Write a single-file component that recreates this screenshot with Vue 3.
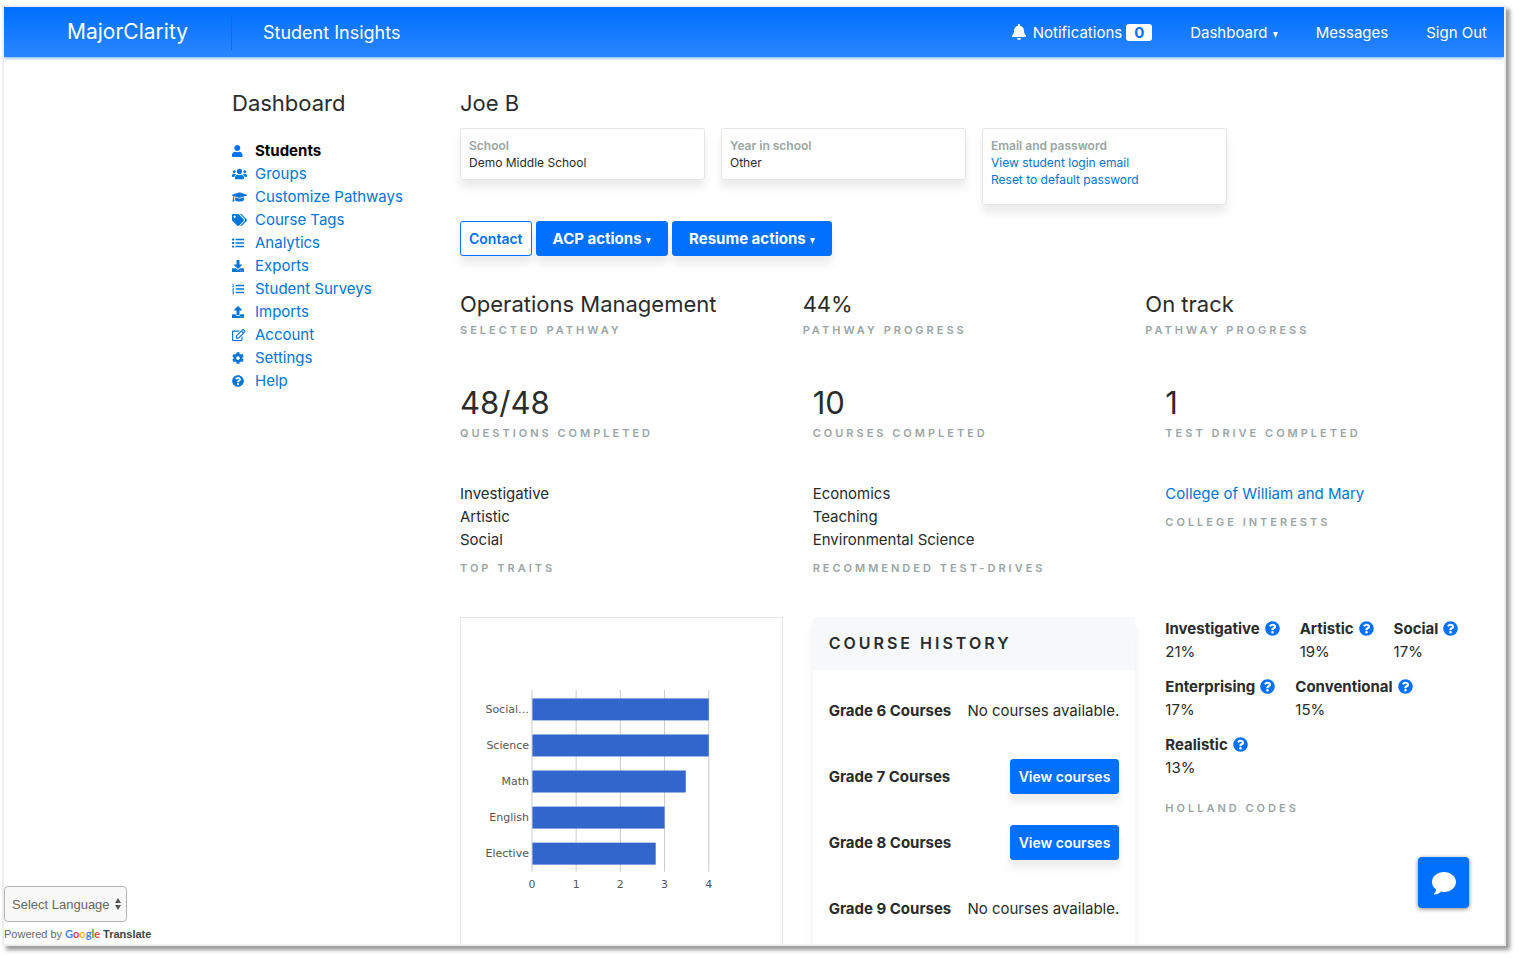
<script setup>
const icons = {
  user: { w: 448, d: 'M224 256c70.7 0 128-57.3 128-128S294.7 0 224 0 96 57.3 96 128s57.3 128 128 128zm89.6 32h-16.7c-22.2 10.2-46.9 16-72.9 16s-50.6-5.8-72.9-16h-16.7C60.2 288 0 348.2 0 422.4V464c0 26.5 21.5 48 48 48h352c26.5 0 48-21.5 48-48v-41.6c0-74.2-60.2-134.4-134.4-134.4z' },
  users: { w: 640, d: 'M96 224c35.3 0 64-28.7 64-64s-28.7-64-64-64-64 28.7-64 64 28.7 64 64 64zm448 0c35.3 0 64-28.7 64-64s-28.7-64-64-64-64 28.7-64 64 28.7 64 64 64zm32 32h-64c-17.6 0-33.5 7.1-45.1 18.6 40.3 22.1 68.9 62 75.1 109.4h66c17.7 0 32-14.3 32-32v-32c0-35.3-28.7-64-64-64zm-256 0c61.9 0 112-50.1 112-112S381.9 32 320 32 208 82.1 208 144s50.1 112 112 112zm76.8 32h-8.3c-20.8 10-43.9 16-68.5 16s-47.6-6-68.5-16h-8.3C179.6 288 128 339.6 128 403.2V432c0 26.5 21.5 48 48 48h288c26.5 0 48-21.5 48-48v-28.8c0-63.6-51.6-115.2-115.2-115.2zm-223.7-13.4C161.5 263.1 145.6 256 128 256H64c-35.3 0-64 28.7-64 64v32c0 17.7 14.3 32 32 32h65.9c6.3-47.4 34.9-87.3 75.2-109.4z' },
  cap: { w: 640, d: 'M622.34 153.2L343.4 67.5c-15.2-4.67-31.6-4.67-46.79 0L17.66 153.2c-23.54 7.23-23.54 38.36 0 45.59l48.63 14.94c-10.67 13.19-17.23 29.28-17.88 46.9C38.78 266.15 32 276.11 32 288c0 10.78 5.68 19.85 13.86 25.65L20.33 428.53C18.11 438.52 25.71 448 35.94 448h56.11c10.24 0 17.84-9.48 15.62-19.47L82.14 313.65C90.32 307.85 96 298.78 96 288c0-11.57-6.47-21.25-15.66-26.87.76-15.02 8.44-28.3 20.69-36.72L296.6 284.5c9.06 2.78 26.44 6.25 46.79 0l278.95-85.7c23.55-7.24 23.55-38.36 0-45.6zM352.79 315.09c-28.53 8.76-52.84 3.92-65.59 0l-145.02-44.55L128 384c0 35.35 85.96 64 192 64s192-28.65 192-64l-14.18-113.47-145.03 44.56z' },
  tags: { w: 640, d: 'M497.941 225.941L286.059 14.059A48 48 0 0 0 252.118 0H48C21.49 0 0 21.49 0 48v204.118a48 48 0 0 0 14.059 33.941l211.882 211.882c18.744 18.745 49.136 18.746 67.882 0l204.118-204.118c18.745-18.745 18.745-49.137 0-67.882zM112 160c-26.51 0-48-21.49-48-48s21.49-48 48-48 48 21.49 48 48-21.49 48-48 48zm513.941 133.823L421.823 497.941c-18.745 18.745-49.137 18.745-67.882 0l-.36-.36L527.64 323.522c16.999-16.999 26.362-39.6 26.362-63.64s-9.362-46.641-26.362-63.64L331.397 0h48.721a48 48 0 0 1 33.941 14.059l211.882 211.882c18.745 18.745 18.745 49.137 0 67.882z' },
  list: { w: 512, d: 'M16 64h64a16 16 0 0 1 16 16v48a16 16 0 0 1-16 16H16a16 16 0 0 1-16-16V80a16 16 0 0 1 16-16zM16 216h64a16 16 0 0 1 16 16v48a16 16 0 0 1-16 16H16a16 16 0 0 1-16-16v-48a16 16 0 0 1 16-16zM16 368h64a16 16 0 0 1 16 16v48a16 16 0 0 1-16 16H16a16 16 0 0 1-16-16v-48a16 16 0 0 1 16-16zM160 72h336a16 16 0 0 1 16 16v32a16 16 0 0 1-16 16H160a16 16 0 0 1-16-16V88a16 16 0 0 1 16-16zM160 224h336a16 16 0 0 1 16 16v32a16 16 0 0 1-16 16H160a16 16 0 0 1-16-16v-32a16 16 0 0 1 16-16zM160 376h336a16 16 0 0 1 16 16v32a16 16 0 0 1-16 16H160a16 16 0 0 1-16-16v-32a16 16 0 0 1 16-16z' },
  ordered: { w: 512, d: 'M24 48h40v96h24v24H8v-24h24V80H8V60zM8 200h80v56l-44 36h44v26H4v-24l52-44v-22H8zM8 352h80v124H8v-26h52v-24H24v-22h36v-26H8zM176 72h320a16 16 0 0 1 16 16v32a16 16 0 0 1-16 16H176a16 16 0 0 1-16-16V88a16 16 0 0 1 16-16zM176 224h320a16 16 0 0 1 16 16v32a16 16 0 0 1-16 16H176a16 16 0 0 1-16-16v-32a16 16 0 0 1 16-16zM176 376h320a16 16 0 0 1 16 16v32a16 16 0 0 1-16 16H176a16 16 0 0 1-16-16v-32a16 16 0 0 1 16-16z' },
  download: { w: 512, d: 'M216 0h80c13.3 0 24 10.7 24 24v168h87.7c17.8 0 26.7 21.5 14.1 34.1L269.7 378.3c-7.5 7.5-19.8 7.5-27.3 0L90.1 226.1c-12.6-12.6-3.7-34.1 14.1-34.1H192V24c0-13.3 10.7-24 24-24zm296 376v112c0 13.3-10.7 24-24 24H24c-13.3 0-24-10.7-24-24V376c0-13.3 10.7-24 24-24h146.7l49 49c20.1 20.1 52.5 20.1 72.6 0l49-49H488c13.3 0 24 10.7 24 24zm-124 88c0-11-9-20-20-20s-20 9-20 20 9 20 20 20 20-9 20-20zm64 0c0-11-9-20-20-20s-20 9-20 20 9 20 20 20 20-9 20-20z' },
  upload: { w: 512, d: 'M296 384h-80c-13.3 0-24-10.7-24-24V192h-87.7c-17.8 0-26.7-21.5-14.1-34.1L242.3 5.7c7.5-7.5 19.8-7.5 27.3 0l152.2 152.2c12.6 12.6 3.7 34.1-14.1 34.1H320v168c0 13.3-10.7 24-24 24zm216-8v112c0 13.3-10.7 24-24 24H24c-13.3 0-24-10.7-24-24V376c0-13.3 10.7-24 24-24h136v8c0 30.9 25.1 56 56 56h80c30.9 0 56-25.1 56-56v-8h136c13.3 0 24 10.7 24 24zm-124 88c0-11-9-20-20-20s-20 9-20 20 9 20 20 20 20-9 20-20zm64 0c0-11-9-20-20-20s-20 9-20 20 9 20 20 20 20-9 20-20z' },
  edit: { w: 576, d: 'M402.3 344.9l32-32c5-5 13.7-1.5 13.7 5.7V464c0 26.5-21.5 48-48 48H48c-26.5 0-48-21.5-48-48V112c0-26.5 21.5-48 48-48h273.5c7.1 0 10.7 8.6 5.7 13.7l-32 32c-1.5 1.5-3.5 2.3-5.7 2.3H48v352h352V350.5c0-2.1.8-4.1 2.3-5.6zm156.6-201.8L296.3 405.7l-90.4 10c-26.2 2.9-48.5-19.2-45.6-45.6l10-90.4L432.9 17.1c22.9-22.9 59.9-22.9 82.7 0l43.2 43.2c22.9 22.9 22.9 60 .1 82.8zM460.1 174L402 115.9 216.2 301.8l-7.3 65.3 65.3-7.3L460.1 174zm64.8-79.7l-43.2-43.2c-4.1-4.1-10.8-4.1-14.8 0L436 82l58.1 58.1 30.9-30.9c4-4.2 4-10.8-.1-14.9z' },
  cog: { w: 512, d: 'M487.4 315.7l-42.6-24.6c4.3-23.2 4.3-47 0-70.2l42.6-24.6c4.9-2.8 7.1-8.6 5.5-14-11.1-35.6-30-67.8-54.7-94.6-3.8-4.1-10-5.1-14.8-2.3L380.8 110c-17.9-15.4-38.5-27.3-60.8-35.1V25.8c0-5.6-3.9-10.5-9.4-11.7-36.7-8.2-74.3-7.8-109.2 0-5.5 1.2-9.4 6.1-9.4 11.7V75c-22.2 7.9-42.8 19.8-60.8 35.1L88.7 85.5c-4.9-2.8-11-1.9-14.8 2.3-24.7 26.7-43.6 58.9-54.7 94.6-1.7 5.4.6 11.2 5.5 14L67.3 221c-4.3 23.2-4.3 47 0 70.2l-42.6 24.6c-4.9 2.8-7.1 8.6-5.5 14 11.1 35.6 30 67.8 54.7 94.6 3.8 4.1 10 5.1 14.8 2.3l42.6-24.6c17.9 15.4 38.5 27.3 60.8 35.1v49.2c0 5.6 3.9 10.5 9.4 11.7 36.7 8.2 74.3 7.8 109.2 0 5.5-1.2 9.4-6.1 9.4-11.7v-49.2c22.2-7.9 42.8-19.8 60.8-35.1l42.6 24.6c4.9 2.8 11 1.9 14.8-2.3 24.7-26.7 43.6-58.9 54.7-94.6 1.5-5.5-.7-11.3-5.6-14.1zM256 336c-44.1 0-80-35.9-80-80s35.9-80 80-80 80 35.9 80 80-35.9 80-80 80z' },
  question: { w: 512, d: 'M504 256c0 136.997-111.043 248-248 248S8 392.997 8 256C8 119.083 119.043 8 256 8s248 111.083 248 248zM262.655 90c-54.497 0-89.255 22.957-116.549 63.758-3.536 5.286-2.353 12.415 2.715 16.258l34.699 26.31c5.205 3.947 12.621 3.008 16.665-2.122 17.864-22.658 30.113-35.797 57.303-35.797 20.429 0 45.698 13.148 45.698 32.958 0 14.976-12.363 22.667-32.534 33.976C247.128 238.528 216 254.941 216 296v4c0 6.627 5.373 12 12 12h56c6.627 0 12-5.373 12-12v-1.333c0-28.462 83.186-29.647 83.186-106.667 0-58.002-60.165-102-116.531-102zM256 338c-25.365 0-46 20.635-46 46 0 25.364 20.635 46 46 46s46-20.636 46-46c0-25.365-20.635-46-46-46z' },
}

const menu = [
  { label: 'Students', icon: icons.user, active: true },
  { label: 'Groups', icon: icons.users },
  { label: 'Customize Pathways', icon: icons.cap },
  { label: 'Course Tags', icon: icons.tags },
  { label: 'Analytics', icon: icons.list },
  { label: 'Exports', icon: icons.download },
  { label: 'Student Surveys', icon: icons.ordered },
  { label: 'Imports', icon: icons.upload },
  { label: 'Account', icon: icons.edit },
  { label: 'Settings', icon: icons.cog },
  { label: 'Help', icon: icons.question },
]

const pathway = [
  { value: 'Operations Management', label: 'Selected pathway' },
  { value: '44%', label: 'Pathway progress' },
  { value: 'On track', label: 'Pathway progress' },
]

const totals = [
  { value: '48/48', label: 'Questions completed' },
  { value: '10', label: 'Courses completed' },
  { value: '1', label: 'Test drive completed' },
]

const traits = ['Investigative', 'Artistic', 'Social']
const drives = ['Economics', 'Teaching', 'Environmental Science']

const chart = [
  { subject: 'Social…', score: 4 },
  { subject: 'Science', score: 4 },
  { subject: 'Math', score: 3.48 },
  { subject: 'English', score: 3 },
  { subject: 'Elective', score: 2.8 },
]
const ticks = [0, 1, 2, 3, 4]
const originX = 71
const unit = 44.25
const rowPitch = 36.1

const grades = [
  { name: 'Grade 6 Courses', available: false },
  { name: 'Grade 7 Courses', available: true },
  { name: 'Grade 8 Courses', available: true },
  { name: 'Grade 9 Courses', available: false },
]

const codes = [
  { name: 'Investigative', share: '21%' },
  { name: 'Artistic', share: '19%' },
  { name: 'Social', share: '17%' },
  { name: 'Enterprising', share: '17%' },
  { name: 'Conventional', share: '15%' },
  { name: 'Realistic', share: '13%' },
]
</script>

<template>
  <div class="frame">
    <header class="topbar">
      <a class="brand" href="#">MajorClarity</a>
      <span class="section">Student Insights</span>
      <nav class="topnav">
        <a href="#" class="notify">
          <svg class="bell" viewBox="0 0 448 512" aria-hidden="true"><path d="M224 512c35.32 0 63.97-28.65 63.97-64H160.03c0 35.35 28.65 64 63.97 64zm215.39-149.71c-19.32-20.76-55.47-51.99-55.47-154.29 0-77.7-54.48-139.9-127.94-155.16V32c0-17.67-14.32-32-31.98-32s-31.98 14.33-31.98 32v20.84C118.56 68.1 64.08 130.3 64.08 208c0 102.3-36.15 133.53-55.47 154.29-6 6.45-8.66 14.16-8.61 21.71.11 16.4 12.98 32 32.1 32h383.8c19.12 0 32-15.6 32.1-32 .05-7.55-2.61-15.27-8.61-21.71z" /></svg>
          <span>Notifications</span>
          <span class="badge">0</span>
        </a>
        <a href="#">Dashboard <svg class="caret" viewBox="0 0 5 6" aria-hidden="true"><path d="M0 0h5L2.500 6z" /></svg></a>
        <a href="#">Messages</a>
        <a href="#">Sign Out</a>
      </nav>
    </header>

    <div class="body">
      <aside class="sidebar">
        <h2 class="title">Dashboard</h2>
        <ul class="menu">
          <li v-for="item in menu" :key="item.label">
            <a href="#" :class="{ active: item.active }">
              <span class="slot">
                <svg class="icon" :viewBox="`0 0 ${item.icon.w} 512`" aria-hidden="true"><path :d="item.icon.d" /></svg>
              </span>
              <span>{{ item.label }}</span>
            </a>
          </li>
        </ul>
      </aside>

      <main class="content">
        <h1 class="title">Joe B</h1>

        <section class="cards">
          <div class="card">
            <strong>School</strong>
            <span>Demo Middle School</span>
          </div>
          <div class="card">
            <strong>Year in school</strong>
            <span>Other</span>
          </div>
          <div class="card tall">
            <strong>Email and password</strong>
            <a href="#">View student login email</a>
            <a href="#">Reset to default password</a>
          </div>
        </section>

        <div class="actions">
          <button type="button" class="btn outline">Contact</button>
          <button type="button" class="btn large">ACP actions <svg class="caret" viewBox="0 0 5 6" aria-hidden="true"><path d="M0 0h5L2.500 6z" /></svg></button>
          <button type="button" class="btn large">Resume actions <svg class="caret" viewBox="0 0 5 6" aria-hidden="true"><path d="M0 0h5L2.500 6z" /></svg></button>
        </div>

        <section class="pathway">
          <div v-for="(p, i) in pathway" :key="i">
            <p class="title">{{ p.value }}</p>
            <p class="label">{{ p.label }}</p>
          </div>
        </section>

        <section class="grid">
          <div v-for="t in totals" :key="t.label">
            <p class="number">{{ t.value }}</p>
            <p class="label">{{ t.label }}</p>
          </div>

          <div>
            <ul class="plain"><li v-for="t in traits" :key="t">{{ t }}</li></ul>
            <p class="label spaced">Top traits</p>
          </div>
          <div>
            <ul class="plain"><li v-for="d in drives" :key="d">{{ d }}</li></ul>
            <p class="label spaced">Recommended test-drives</p>
          </div>
          <div>
            <ul class="plain"><li><a href="#">College of William and Mary</a></li></ul>
            <p class="label spaced">College interests</p>
          </div>

          <div class="chart">
            <svg viewBox="0 0 321 360" role="img" aria-label="Average score by subject">
              <line v-for="t in ticks" :key="t" :x1="originX + t * unit" :x2="originX + t * unit" y1="72" y2="254" class="gridline" />
              <g v-for="(c, i) in chart" :key="c.subject">
                <rect :x="originX + 0.5" :y="80.5 + i * rowPitch" :width="c.score * unit - 0.5" height="22" class="bar" />
                <text :x="originX - 3" :y="95 + i * rowPitch" text-anchor="end">{{ c.subject }}</text>
              </g>
              <text v-for="t in ticks" :key="'n' + t" :x="originX + t * unit" y="270" text-anchor="middle">{{ t }}</text>
            </svg>
          </div>

          <div class="history">
            <h3>Course History</h3>
            <div class="grades">
              <div v-for="g in grades" :key="g.name" class="grade">
                <strong>{{ g.name }}</strong>
                <button v-if="g.available" type="button" class="btn">View courses</button>
                <span v-else>No courses available.</span>
              </div>
            </div>
          </div>

          <div>
            <ul class="codes">
              <li v-for="c in codes" :key="c.name">
                <span class="code">
                  <strong>{{ c.name }}</strong>
                  <svg viewBox="0 0 512 512" aria-hidden="true"><path :d="icons.question.d" /></svg>
                </span>
                <span>{{ c.share }}</span>
              </li>
            </ul>
            <p class="label spaced">Holland codes</p>
          </div>
        </section>
      </main>
    </div>

    <div class="translate">
      <div class="picker">
        <select aria-label="Select Language">
          <option>Select Language</option>
        </select>
        <svg viewBox="0 0 6 12" aria-hidden="true"><path d="M0 5L3 0l3 5zM0 7h6l-3 5z" /></svg>
      </div>
      <p class="powered">
        <span>Powered by</span>
        <span class="google"><i class="b">G</i><i class="r">o</i><i class="y">o</i><i class="b">g</i><i class="g">l</i><i class="r">e</i></span>
        <strong>Translate</strong>
      </p>
    </div>

    <button type="button" class="chat" aria-label="Open chat">
      <svg viewBox="0 0 26 24" aria-hidden="true"><path d="M13 1C6.400 1 1 5.400 1 11c0 3 1.500 5.700 4.200 7.500-.2 1.700-1 3-2 4-.4.500 0 1.100.7 1 2.800-.5 4.900-1.500 6.300-3 .9.300 1.800.5 2.800.5 6.600 0 12-4.400 12-10S19.600 1 13 1z" /></svg>
    </button>
  </div>
</template>

<style>
body {
  margin: 0;
  background: #fff;
}
</style>

<style scoped>
* {
  box-sizing: border-box;
}
.frame {
  position: relative;
  height: calc(100vh - 17px);
  margin: 5px 12px 12px 2px;
  overflow: hidden;
  border: 2px solid #eee;
  box-shadow: 4px 4px 4px #999;
  background: #fff;
  color: #292b2c;
  font-family: Inter, "Liberation Sans", sans-serif;
  font-size: 15px;
  line-height: 23px;
}
a {
  color: #0275d8;
  text-decoration: none;
}
h1, h2, h3, p, ul {
  margin: 0;
  padding: 0;
}
ul {
  list-style: none;
}
button {
  font-family: inherit;
  cursor: pointer;
}
strong {
  font-weight: 700;
}

.topbar {
  display: flex;
  align-items: center;
  height: 50px;
  padding-right: 17px;
  background: linear-gradient(#0070ff, #2a85ff);
  box-shadow: 0 1px 3px rgba(0, 112, 255, 0.6);
  color: #fff;
}
.topbar a {
  color: #fff;
}
.brand {
  width: 228px;
  padding-left: 63px;
  border-right: 1px solid #0d6cec;
  font-size: 21px;
  line-height: 36px;
}
.section {
  padding-left: 31px;
  font-size: 18px;
}
.topnav {
  display: flex;
  gap: 38px;
  margin-left: auto;
}
.notify {
  display: flex;
  align-items: center;
}
.bell {
  width: 14px;
  height: 16px;
  margin-right: 7px;
  fill: #fff;
}
.badge {
  width: 26px;
  margin-left: 4px;
  border-radius: 3px;
  background: #fff;
  color: #0070ff;
  font-weight: 700;
  line-height: 17px;
  text-align: center;
}
.caret {
  width: 5px;
  height: 6px;
  margin-left: 1px;
  fill: currentColor;
}

.body {
  display: grid;
  grid-template-columns: 228px minmax(0, 1fr);
  padding: 30px 16px 0 228px;
}
.title {
  font-size: 22px;
  font-weight: 400;
  line-height: 32px;
}
.menu {
  margin-top: 20px;
}
.menu a {
  display: flex;
  align-items: center;
  gap: 8px;
}
.menu .active {
  color: #000;
  font-weight: 700;
}
.slot {
  display: flex;
  width: 15px;
}
.icon {
  height: 12px;
  fill: #0275d8;
}
.active .icon {
  fill: #0070ff;
}

.cards {
  display: grid;
  grid-template-columns: repeat(4, minmax(0, 1fr));
  gap: 16px;
  align-items: start;
  margin-top: 9px;
}
.card {
  display: flex;
  flex-direction: column;
  padding: 8px;
  border: 1px solid #e5e5e5;
  border-radius: 3px;
  box-shadow: 0 8px 8px rgba(0, 0, 0, 0.08);
  font-size: 12px;
  line-height: 17px;
}
.card.tall {
  padding-bottom: 16px;
}
.card strong {
  color: #9aa5a6;
  font-weight: 600;
}

.actions {
  display: flex;
  gap: 4px;
  margin-top: 16px;
}
.btn {
  height: 35px;
  padding: 0 8px;
  border: 1px solid #0070ff;
  border-radius: 3px;
  background: #0070ff;
  box-shadow: 0 8px 8px rgba(0, 0, 0, 0.08);
  color: #fff;
  font-size: 14px;
  font-weight: 600;
}
.btn.outline {
  background: #fff;
  color: #0070ff;
}
.btn.large {
  padding: 0 16px;
  font-size: 15px;
  font-weight: 700;
}

.pathway {
  display: grid;
  grid-template-columns: repeat(3, minmax(0, 1fr));
  margin: 32px 0 46px;
}
.pathway .title {
  margin-bottom: 2px;
}
.label {
  color: #9aa5a6;
  font-size: 11px;
  font-weight: 600;
  line-height: 17px;
  letter-spacing: 3px;
  text-transform: uppercase;
}
.spaced {
  margin-top: 9px;
}
.grid {
  display: grid;
  grid-template-columns: repeat(3, minmax(0, 1fr));
  gap: 40px 30px;
}
.number {
  margin-bottom: 4px;
  font-size: 31px;
  line-height: 36px;
}

.chart {
  min-height: 400px;
  border: 1px solid #e5e5e5;
}
.chart svg {
  display: block;
  width: 100%;
}
.chart text {
  fill: #555;
  font-family: "DejaVu Sans", sans-serif;
  font-size: 11px;
}
.gridline {
  stroke: #ccc;
}
.bar {
  fill: #3366cc;
}

.history {
  border-radius: 4px;
  box-shadow: 0 8px 8px rgba(0, 0, 0, 0.08);
}
.history h3 {
  padding: 15px 16px;
  background: #f6f8fa;
  font-size: 16px;
  font-weight: 600;
  line-height: 23px;
  letter-spacing: 3px;
  text-transform: uppercase;
}
.grades {
  padding: 7px 16px;
}
.grade {
  display: flex;
  align-items: center;
  justify-content: space-between;
  height: 66px;
}

.codes {
  display: flex;
  flex-wrap: wrap;
  column-gap: 20px;
}
.codes li {
  display: flex;
  flex-direction: column;
  margin-bottom: 12px;
}
.code {
  display: flex;
  align-items: center;
  gap: 5px;
}
.code svg {
  width: 15px;
  height: 15px;
  fill: #0070ff;
}

.translate {
  position: absolute;
  bottom: 0;
  left: 0;
  color: #666;
  font-family: "Liberation Sans", Arial, sans-serif;
}
.picker {
  position: relative;
  width: 123px;
}
.picker select {
  appearance: none;
  display: block;
  width: 100%;
  height: 36px;
  padding: 0 7px;
  border: 1px solid #b5b5b5;
  border-radius: 4px;
  background: #f8f8f8;
  color: #666;
  font-family: inherit;
  font-size: 13px;
}
.picker svg {
  position: absolute;
  top: 12px;
  right: 6px;
  width: 6px;
  height: 12px;
  fill: #555;
}
.powered {
  display: flex;
  align-items: baseline;
  gap: 3px;
  padding-top: 2px;
  font-size: 11px;
  line-height: 19px;
}
.powered strong {
  color: #444;
}
.google {
  font-family: Lato, sans-serif;
  font-size: 11px;
  font-weight: 700;
}
.google i {
  font-style: normal;
}
.b { color: #4285f4; }
.r { color: #ea4335; }
.y { color: #fbbc05; }
.g { color: #34a853; }

.chat {
  display: flex;
  position: absolute;
  right: 35px;
  bottom: 36px;
  align-items: center;
  justify-content: center;
  width: 51px;
  height: 51px;
  padding: 0;
  border: 0;
  border-radius: 4px;
  background: #0070ff;
  box-shadow: 0 1px 4px rgba(0, 0, 0, 0.5);
}
.chat svg {
  width: 26px;
  height: 24px;
  fill: #fff;
}
</style>
